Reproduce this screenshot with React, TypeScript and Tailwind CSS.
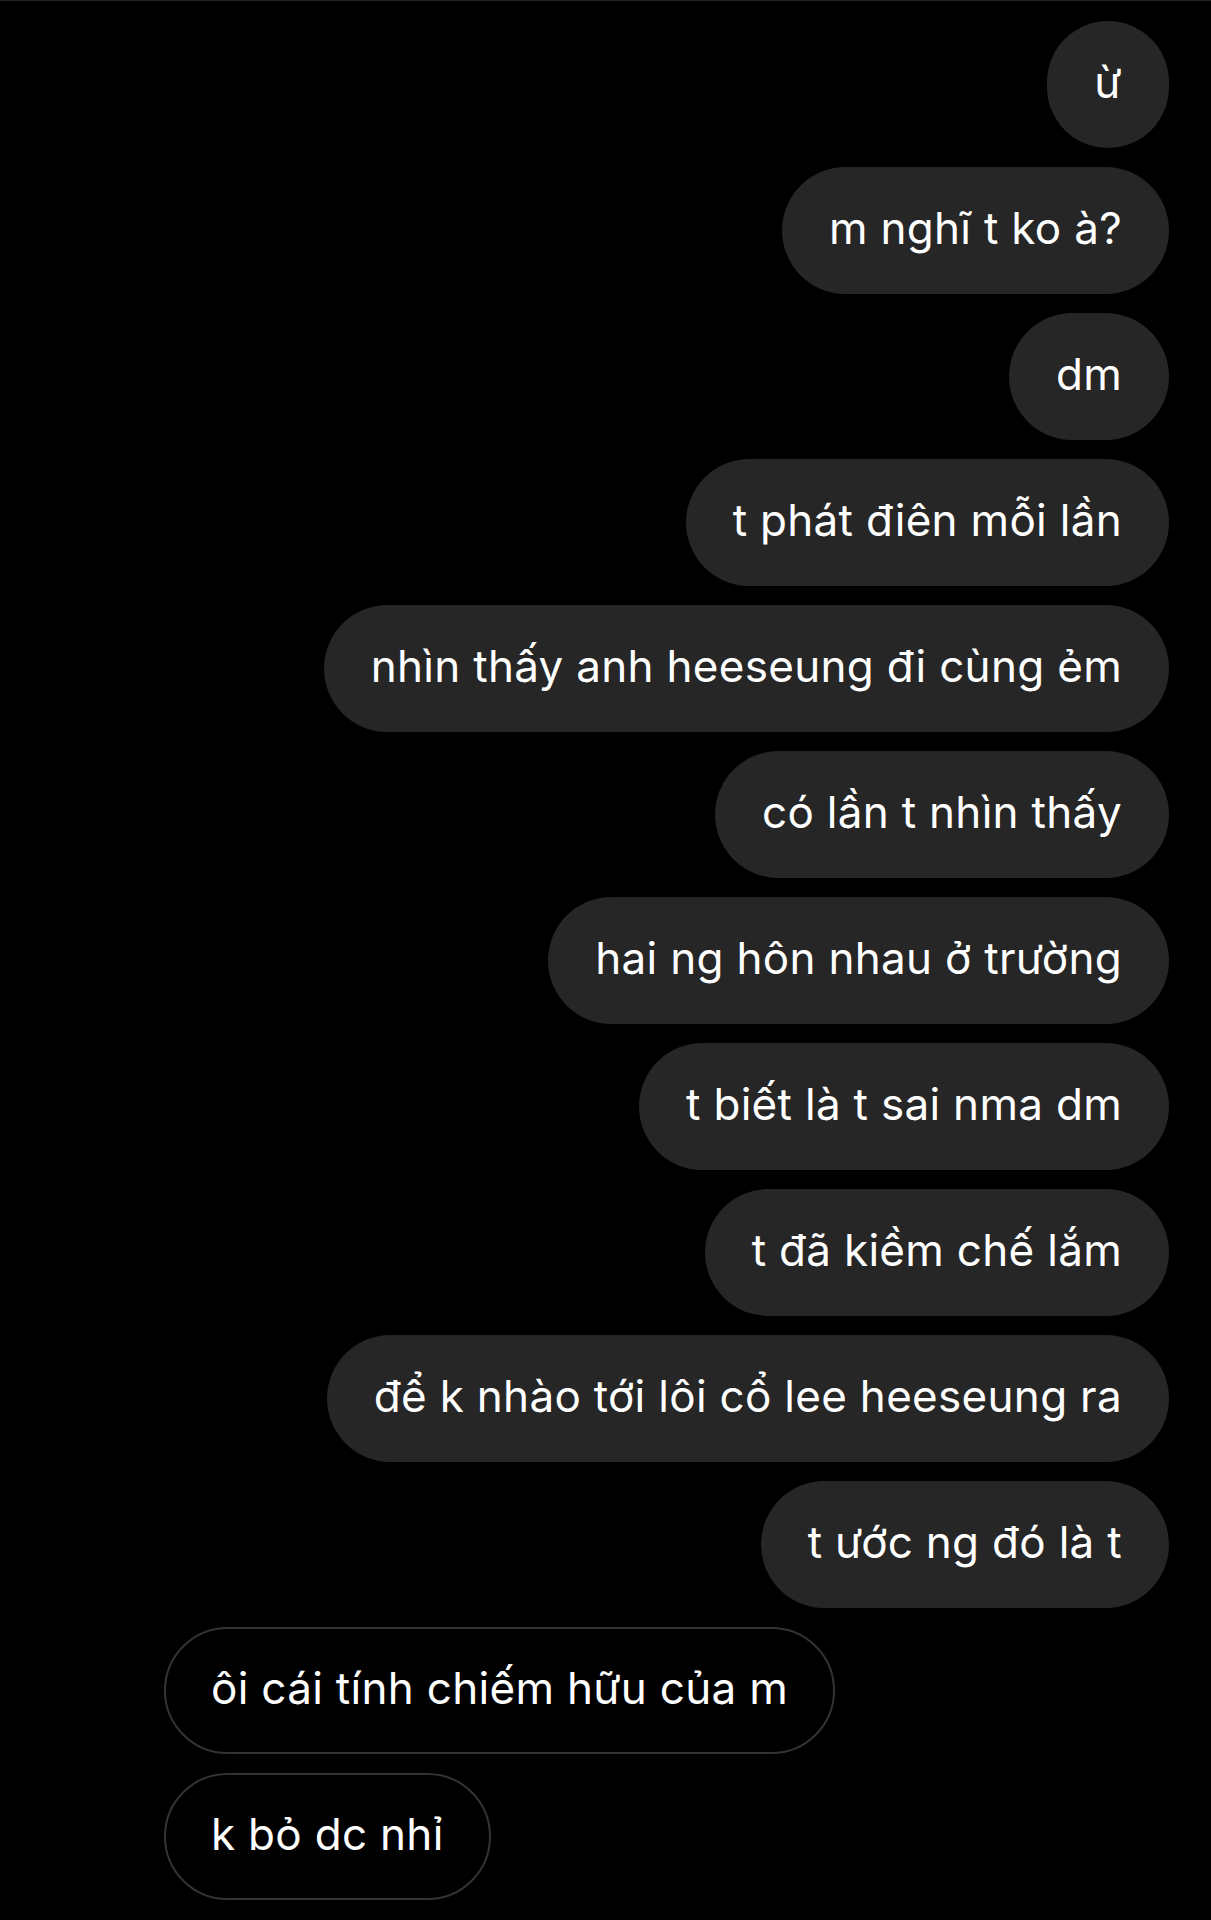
const mine = [
  "ừ",
  "m nghĩ t ko à?",
  "dm",
  "t phát điên mỗi lần",
  "nhìn thấy anh heeseung đi cùng ẻm",
  "có lần t nhìn thấy",
  "hai ng hôn nhau ở trường",
  "t biết là t sai nma dm",
  "t đã kiềm chế lắm",
  "để k nhào tới lôi cổ lee heeseung ra",
  "t ước ng đó là t",
];

const theirs = ["ôi cái tính chiếm hữu của m", "k bỏ dc nhỉ"];

export default function App() {
  return (
    <div className="min-h-[1920px] w-full bg-black border-t border-[#262626] font-['Inter',sans-serif] text-[44px] text-white">
      <div className="flex flex-col gap-[19px] pt-[20px] pr-[42px] pl-[164px]">
        {mine.map((msg) => (
          <div key={msg} className="flex justify-end">
            <div className="flex h-[127px] min-w-[122px] items-center justify-center rounded-full bg-[#262626] px-[47px] pb-[6px] tracking-[0.3px] whitespace-nowrap">
              {msg}
            </div>
          </div>
        ))}
        {theirs.map((msg) => (
          <div key={msg} className="flex justify-start">
            <div className="flex h-[127px] items-center rounded-full border-2 border-[#333333] bg-black px-[45px] pb-[6px] tracking-[0.3px] whitespace-nowrap">
              {msg}
            </div>
          </div>
        ))}
      </div>
    </div>
  );
}
